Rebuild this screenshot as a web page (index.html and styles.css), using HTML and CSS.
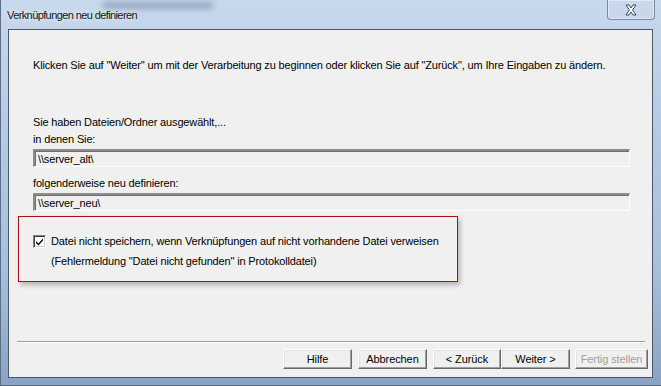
FILE: index.html
```html
<!DOCTYPE html>
<html lang="de">
<head>
  <meta charset="UTF-8" />
  <title>Verknüpfungen neu definieren</title>
  <link rel="stylesheet" href="styles.css">
</head>
<body>
  <div class="window">
    <div class="titlebar">
      <span class="blur-text"></span>
      <span class="title">Verknüpfungen neu definieren</span>
      <div class="close">
        <svg width="14" height="12" viewBox="0 0 14 12">
          <path d="M2 1 L5 1 L7 4 L9 1 L12 1 L8.6 6 L12 11 L9 11 L7 8 L5 11 L2 11 L5.4 6 Z" fill="#fff" stroke="#3c4a5c" stroke-width="1" stroke-linejoin="round"/>
        </svg>
      </div>
    </div>

    <div class="client">
      <div class="content">
        <p class="intro">Klicken Sie auf "Weiter" um mit der Verarbeitung zu beginnen oder klicken Sie auf "Zurück", um Ihre Eingaben zu ändern.</p>
        <p class="selected">Sie haben Dateien/Ordner ausgewählt,...</p>
        <label class="field-label">in denen Sie:</label>
        <div class="field">\\server_alt\</div>
        <label class="field-label second">folgenderweise neu definieren:</label>
        <div class="field">\\server_neu\</div>

        <div class="highlight">
          <div class="check-row">
            <span class="checkbox">
              <svg width="9" height="9" viewBox="0 0 9 9">
                <path d="M1 4 L3.5 6.5 L8 1.5 L8 3.5 L3.5 8.5 L1 6 Z" fill="#000"/>
              </svg>
            </span>
            <span>Datei nicht speichern, wenn Verknüpfungen auf nicht vorhandene Datei verweisen</span>
          </div>
          <div class="check-note">(Fehlermeldung "Datei nicht gefunden" in Protokolldatei)</div>
        </div>
      </div>

      <div class="separator"></div>

      <div class="buttons">
        <button class="btn-help">Hilfe</button>
        <button class="btn-cancel">Abbrechen</button>
        <div class="pair">
          <button class="btn-back">&lt; Zurück</button>
          <button class="btn-next">Weiter &gt;</button>
        </div>
        <button class="btn-finish disabled">Fertig stellen</button>
      </div>
    </div>
  </div>
</body>
</html>
```

FILE: styles.css
```css
body {
  margin: 0;
  padding: 0;
  background: #fff;
}

.window {
  width: 661px;
  height: 386px;
  box-sizing: border-box;
  padding: 0 8px 7px 7px;
  background: linear-gradient(180deg, #c9d9ec 0%, #b6cbe4 30%, #a8bfdb 70%, #8aa3c4 100%);
  border-left: 1px solid #5c6f88;
  border-bottom: 1px solid #5c6f88;
  display: flex;
  flex-direction: column;
  position: relative;
  overflow: hidden;
}

.titlebar {
  height: 29px;
  display: flex;
  align-items: flex-start;
  position: relative;
}

.blur-text {
  position: absolute;
  left: 95px;
  top: 2px;
  width: 110px;
  height: 7px;
  background: #6f84a4;
  filter: blur(3px);
  opacity: 0.6;
}

.title {
  font-family: "Liberation Sans", Arial, sans-serif;
  font-size: 11px;
  letter-spacing: -0.6px;
  color: #101822;
  margin-top: 9px;
  margin-left: -1px;
  position: relative;
  text-shadow: 0 0 6px rgba(255,255,255,0.9);
}

.close {
  margin-left: auto;
  margin-right: -2px;
  width: 46px;
  height: 19px;
  border: 1px solid #7b8aa0;
  border-top: none;
  border-radius: 0 0 4px 4px;
  box-shadow: inset 0 0 0 1px rgba(255,255,255,0.45);
  display: flex;
  align-items: center;
  justify-content: center;
}

.client {
  flex: 1;
  background: #f0f0f0;
  border: 1px solid #4a5669;
  display: flex;
  flex-direction: column;
  font-family: "Liberation Sans", Arial, sans-serif;
  font-size: 11px;
  letter-spacing: -0.15px;
  color: #000;
}

.content {
  padding: 0 22px 0 24px;
  flex: 1;
}

.content p {
  margin: 0;
  line-height: 13px;
}

.intro {
  margin-top: 29px !important;
}

.selected {
  margin-top: 44px !important;
}

.field-label {
  display: block;
  line-height: 13px;
  margin-top: 4px;
}

.field-label.second {
  margin-top: 10px;
}

.field {
  height: 18px;
  box-sizing: border-box;
  margin-top: 3px;
  padding: 2px 3px;
  line-height: 13px;
  border-top: 2px solid #8c8c8c;
  border-left: 2px solid #8c8c8c;
  border-right: 1px solid #fff;
  border-bottom: 1px solid #fff;
  box-shadow: inset 1px 1px 0 #6e6e6e;
  background: #f0f0f0;
}

.highlight {
  margin: 5px 0 0 -15px;
  width: 440px;
  height: 66px;
  box-sizing: border-box;
  border: 1px solid #b01010;
  box-shadow: 2px 3px 5px rgba(0,0,0,0.25);
  padding: 18px 0 0 14px;
}

.check-row {
  display: flex;
  align-items: center;
  gap: 5px;
  line-height: 13px;
}

.checkbox {
  width: 11px;
  height: 11px;
  border-top: 1px solid #808080;
  border-left: 1px solid #808080;
  border-right: 1px solid #fff;
  border-bottom: 1px solid #fff;
  box-shadow: inset 1px 1px 0 #404040, inset -1px -1px 0 #d4d0c8;
  background: #fff;
  display: flex;
  align-items: center;
  justify-content: center;
}

.check-note {
  margin-top: 7px;
  margin-left: 18px;
  line-height: 13px;
}

.separator {
  margin: 0 7px 0 8px;
  height: 1px;
  background: #a0a0a0;
  border-bottom: 1px solid #fff;
}

.buttons {
  display: flex;
  justify-content: flex-end;
  gap: 6px;
  padding: 6px 4px 8px 0;
}

.pair {
  display: flex;
  margin-right: -1px;
}

button {
  font-family: "Liberation Sans", Arial, sans-serif;
  font-size: 11px;
  letter-spacing: -0.1px;
  color: #000;
  width: 69px;
  height: 20px;
  padding: 0;
  box-sizing: border-box;
  background: #f0f0f0;
  border-top: 1px solid #fff;
  border-left: 1px solid #fff;
  border-right: 1px solid #696969;
  border-bottom: 1px solid #696969;
  box-shadow: inset -1px -1px 0 #a0a0a0, inset 1px 1px 0 #e3e3e3;
}

.btn-back {
  width: 68px;
}

button.disabled {
  width: 73px;
  color: #a0a0a0;
}
```
